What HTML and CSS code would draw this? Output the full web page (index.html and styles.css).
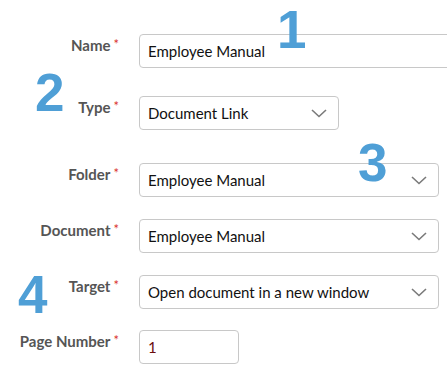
FILE: index.html
```html
<!DOCTYPE html>
<html>
<head>
<meta charset="utf-8">
<link rel="stylesheet" href="styles.css">
</head>
<body>
<div class="form">
  <div class="row r-name">
    <label class="lbl">Name<span class="req">*</span></label>
    <div class="field w-full">Employee Manual</div>
  </div>
  <div class="row r-type">
    <label class="lbl">Type<span class="req">*</span></label>
    <div class="field select w-type">Document Link
      <svg class="chev" width="16" height="9" viewBox="0 0 16 9"><polyline points="1,1 8,7.5 15,1" fill="none" stroke="#7a7a7a" stroke-width="1.6"/></svg>
    </div>
  </div>
  <div class="row r-folder">
    <label class="lbl">Folder<span class="req">*</span></label>
    <div class="field select w-wide">Employee Manual
      <svg class="chev" width="16" height="9" viewBox="0 0 16 9"><polyline points="1,1 8,7.5 15,1" fill="none" stroke="#7a7a7a" stroke-width="1.6"/></svg>
    </div>
  </div>
  <div class="row r-doc">
    <label class="lbl">Document<span class="req">*</span></label>
    <div class="field select w-wide">Employee Manual
      <svg class="chev" width="16" height="9" viewBox="0 0 16 9"><polyline points="1,1 8,7.5 15,1" fill="none" stroke="#7a7a7a" stroke-width="1.6"/></svg>
    </div>
  </div>
  <div class="row r-target">
    <label class="lbl">Target<span class="req">*</span></label>
    <div class="field select w-wide">Open document in a new window
      <svg class="chev" width="16" height="9" viewBox="0 0 16 9"><polyline points="1,1 8,7.5 15,1" fill="none" stroke="#7a7a7a" stroke-width="1.6"/></svg>
    </div>
  </div>
  <div class="row r-page">
    <label class="lbl">Page Number<span class="req">*</span></label>
    <div class="field w-page num">1</div>
  </div>
</div>
<div class="badge b1">1</div>
<div class="badge b2">2</div>
<div class="badge b3">3</div>
<div class="badge b4">4</div>
</body>
</html>
```
FILE: styles.css
```css
html, body {
  margin: 0;
  padding: 0;
  background: #fff;
  width: 447px;
  height: 383px;
  overflow: hidden;
  position: relative;
}
.form {
  display: flex;
  flex-direction: column;
  padding-top: 34px;
}
.row {
  display: flex;
  align-items: flex-start;
}
.r-type { margin-top: 28px; }
.r-folder { margin-top: 33px; }
.r-doc { margin-top: 22px; }
.r-target { margin-top: 22px; }
.r-page { margin-top: 21px; }
.lbl {
  width: 119px;
  flex: none;
  text-align: right;
  font-family: Lato, "Liberation Sans", sans-serif;
  font-weight: bold;
  font-size: 15px;
  color: #555;
  padding-top: 1px;
  margin-right: 20px;
  line-height: 18px;
}
.req {
  color: #d9332d;
  font-weight: normal;
  font-size: 13px;
  margin-left: 3px;
  vertical-align: 2px;
}
.field {
  box-sizing: border-box;
  height: 34px;
  border: 1px solid #c8c8c8;
  border-radius: 4px;
  padding: 0 8px;
  display: flex;
  align-items: center;
  font-family: Lato, "Liberation Sans", sans-serif;
  font-size: 15px;
  color: #111;
  flex: none;
  position: relative;
}
.select { justify-content: space-between; }
.chev { position: absolute; right: 11px; top: 12px; }
.w-full { width: 320px; }
.w-type { width: 200px; }
.w-wide { width: 300px; }
.w-page { width: 100px; }
.num { color: #6b0e0e; }
.badge {
  position: absolute;
  font-family: "Liberation Sans", Arial, sans-serif;
  font-weight: bold;
  font-size: 53px;
  line-height: 53px;
  color: #4f9fd6;
}
.b1 { left: 277px; top: 3px; }
.b2 { left: 35px; top: 66px; }
.b3 { left: 358px; top: 136px; }
.b4 { left: 18px; top: 268px; }
```
